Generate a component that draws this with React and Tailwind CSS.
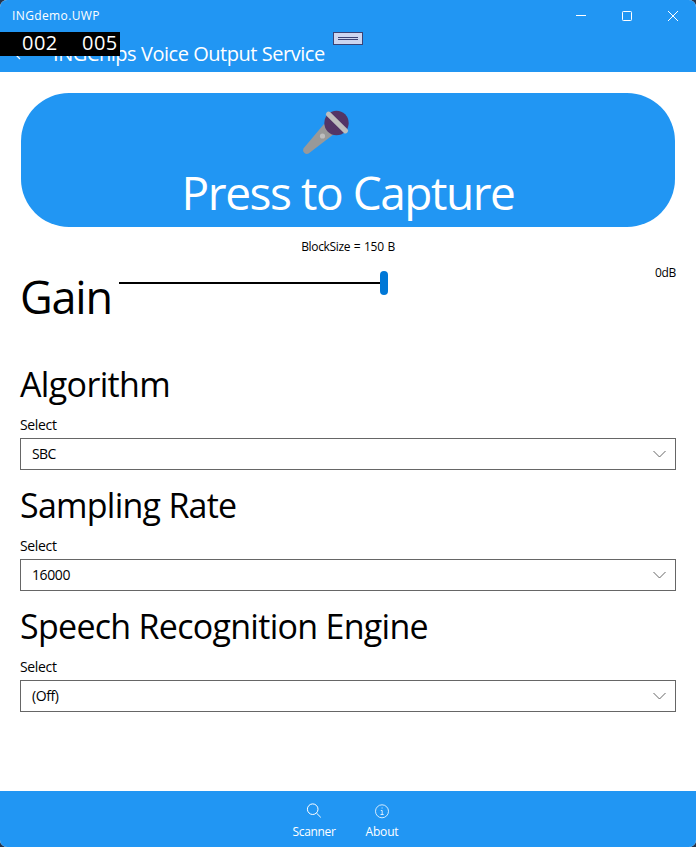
const fields = [
  { title: 'Algorithm', value: 'SBC', titleClass: 'tracking-[-0.65px]', valueClass: 'tracking-[-0.6px]' },
  { title: 'Sampling Rate', value: '16000', titleClass: 'tracking-[-0.75px]', valueClass: 'tracking-[-0.4px]' },
  { title: 'Speech Recognition Engine', value: '(Off)', titleClass: 'tracking-[-0.72px]', valueClass: 'tracking-[-0.4px]' },
];

function TitleBar() {
  return (
    <div className="flex h-8 items-center justify-between pl-3 text-white">
      <span className="text-[12px] leading-4 tracking-[0.38px]">INGdemo.UWP</span>
      <div className="flex h-8">
        <svg className="h-8 w-[46px]" viewBox="0 0 46 32" fill="none" stroke="white">
          <path d="M18 15.5h10" />
        </svg>
        <svg className="h-8 w-[46px]" viewBox="0 0 46 32" fill="none" stroke="white">
          <rect x="18.5" y="11.5" width="9" height="9" rx="0.8" />
        </svg>
        <svg className="h-8 w-[46px]" viewBox="0 0 46 32" fill="none" stroke="white">
          <path d="M18 11l10 10M28 11l-10 10" />
        </svg>
      </div>
    </div>
  );
}

function Microphone() {
  return (
    <svg className="h-[46px] w-[48px]" viewBox="0 0 48 46">
      <path d="M22 14L1.4 38.5A3.9 3.9 0 0 0 6.6 43.6L32 24Z" fill="#999" />
      <circle cx="34.5" cy="13" r="12.2" fill="#533566" />
      <path d="M26.5 4.2L43.5 20.8" stroke="#bebebe" strokeWidth="5.2" strokeLinecap="round" />
      <circle cx="20.5" cy="26" r="2.6" fill="#bebebe" />
    </svg>
  );
}

function Field({ title, value, titleClass, valueClass }) {
  return (
    <section className="h-[121px]">
      <h2 className={`h-[55px] pt-px text-[34px] leading-[46px] whitespace-nowrap ${titleClass}`}>{title}</h2>
      <div className="h-[23px] text-[14px] leading-[19px] tracking-[-0.35px]">Select</div>
      <div className="flex h-8 items-center justify-between border border-[#666] pr-[9px] pl-[11px]">
        <span className={`text-[14px] leading-5 ${valueClass}`}>{value}</span>
        <svg className="h-[8px] w-[13px]" viewBox="0 0 13 8" fill="none" stroke="#666">
          <path d="M0.5 1l6 6 6-6" />
        </svg>
      </div>
    </section>
  );
}

export default function App() {
  return (
    <div className="h-[847px] w-[696px] overflow-hidden bg-[#24344c] font-['Open_Sans','Noto_Sans',sans-serif] text-black">
      <div className="relative flex h-full flex-col overflow-hidden rounded-[7px] bg-white">
        <header className="h-[72px] bg-[#2196f3]">
          <TitleBar />
          <div className="flex h-10 items-center pl-3 text-white">
            <svg className="h-5 w-[41px]" viewBox="0 0 41 20" fill="none" stroke="white" strokeWidth="1.2">
              <path d="M9 7L3.5 12.5l4.5 4.5" />
            </svg>
            <span className="pt-[4px] text-[20px] leading-7 tracking-[-0.46px]">INGChips Voice Output Service</span>
          </div>
        </header>
        <div className="absolute top-8 left-0 flex h-6 w-[120px] bg-black text-[20px] leading-[22px] tracking-[0.5px] text-white">
          <span className="w-[60px] pl-[22px]">002</span>
          <span className="w-[60px] pl-[22px]">005</span>
        </div>
        <div className="absolute top-8 left-[333px] flex h-[13px] w-[30px] flex-col justify-center gap-px border border-[#3b4275] bg-[#ccd5f0] px-1">
          <div className="h-px bg-[#3b4275]" />
          <div className="h-px bg-[#3b4275]" />
        </div>

        <main className="flex-1 px-5 pt-[21px]">
          <button className="mx-px flex h-[134px] w-[654px] flex-col items-center rounded-[48px] bg-[#2196f3] pt-[17px] text-white">
            <span className="mr-[44px]"><Microphone /></span>
            <span className="mt-[5px] text-[46px] leading-[62px] tracking-[-1.45px] whitespace-nowrap">Press to Capture</span>
          </button>
          <div className="mt-[11px] h-[18px] text-center text-[12px] leading-[18px] tracking-[-0.35px] [word-spacing:1px]">BlockSize = 150 B</div>
          <div className="mt-[8px] flex h-[98px]">
            <span className="w-[99px] pt-[2px] text-[45px] leading-[62px] tracking-[-1.2px]">Gain</span>
            <div className="mt-[7px] flex h-6 w-[269px] items-center">
              <div className="h-[2px] flex-1 bg-black" />
              <div className="h-6 w-2 rounded-full bg-[#0078d7]" />
            </div>
            <span className="flex-1 text-right text-[12px] leading-[18px] tracking-[-0.3px]">0dB</span>
          </div>
          <div className="mt-[-2px]">
            {fields.map((field) => <Field key={field.title} {...field} />)}
          </div>
        </main>

        <footer className="flex h-[56px] justify-center bg-[#2196f3] text-[12px] leading-4 text-white">
          <div className="flex w-[68px] flex-col items-center pt-[12px]">
            <svg className="h-4 w-4" viewBox="0 0 16 16" fill="none" stroke="white">
              <circle cx="6.7" cy="6.2" r="5.3" />
              <path d="M10.4 10l4.4 4.4" />
            </svg>
            <span className="mt-[5px] tracking-[-0.35px]">Scanner</span>
          </div>
          <div className="flex w-[68px] flex-col items-center pt-[12px]">
            <svg className="h-4 w-4" viewBox="0 0 16 16" fill="none" stroke="white" strokeWidth="0.8">
              <circle cx="8" cy="8.3" r="6.5" />
              <path d="M6.8 7.5h1.4v4M6.5 11.5h3.2M7.6 5h1" />
            </svg>
            <span className="mt-[5px] tracking-[-0.2px]">About</span>
          </div>
        </footer>
      </div>
    </div>
  );
}
